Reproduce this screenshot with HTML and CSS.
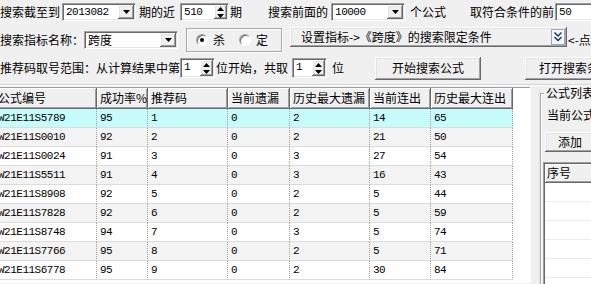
FILE: index.html
```html
<!DOCTYPE html>
<html>
<head>
  <meta charset="utf-8">
  <title>搜索公式</title>
  <link rel="stylesheet" href="styles.css">
</head>

<body>
<div class="app">

  <!-- search range -->
  <div class="bar row1">
    <span>搜索截至到</span>
    <div class="field combo date"><span class="val">2013082</span><span class="drop"><svg width="7" height="4"><polygon points="0,0 7,0 3.5,4"/></svg></span></div>
    <span class="gap3">期的近</span>
    <div class="field spin periods"><span class="val">510</span><span class="arrows"><svg width="7" height="11"><polygon points="0,4 7,4 3.5,0"/><polygon points="0,7 7,7 3.5,11"/></svg></span></div>
    <span class="gap1">期</span>
    <span class="gap26">搜索前面的</span>
    <div class="field combo total"><span class="val">10000</span><span class="drop"><svg width="7" height="4"><polygon points="0,0 7,0 3.5,4"/></svg></span></div>
    <span class="gap5">个公式</span>
    <span class="gap24">取符合条件的前</span>
    <div class="field top"><span class="val">50</span></div>
  </div>

  <!-- index -->
  <div class="bar row2">
    <span>搜索指标名称：</span>
    <div class="field combo index"><span class="val cjk">跨度</span><span class="drop"><svg width="7" height="4"><polygon points="0,0 7,0 3.5,4"/></svg></span></div>
    <div class="opts">
      <span class="radio on"></span><span class="opt">杀</span>
      <span class="radio second"></span><span class="opt">定</span>
    </div>
    <div class="picker">
      <span class="picker-text">设置指标-&gt;《跨度》的搜索限定条件</span>
      <svg class="picker-icon" width="14" height="16" viewBox="0 0 14 16"><rect x=".5" y=".5" width="13" height="15" fill="#f3f6fb" stroke="#9aa8c0"/><path d="M3.5 3.5l3.5 3.5 3.5-3.5M3.5 8l3.5 3.5 3.5-3.5" fill="none" stroke="#1d2c63" stroke-width="1.4"/></svg>
    </div>
    <span class="gap1">&lt;-点</span>
  </div>

  <!-- pick range + actions -->
  <div class="bar row3">
    <span>推荐码取号范围：从计算结果中第</span>
    <div class="field spin pick"><span class="val">1</span><span class="arrows"><svg width="7" height="11"><polygon points="0,4 7,4 3.5,0"/><polygon points="0,7 7,7 3.5,11"/></svg></span></div>
    <span class="gap1">位开始，共取</span>
    <div class="field spin pick gap4"><span class="val">1</span><span class="arrows"><svg width="7" height="11"><polygon points="0,4 7,4 3.5,0"/><polygon points="0,7 7,7 3.5,11"/></svg></span></div>
    <span class="gap5">位</span>
    <button class="btn start">开始搜索公式</button>
    <button class="btn open">打开搜索条件</button>
  </div>

  <div class="sep"></div>

  <div class="main">
    <div class="grid-wrap">
      <table class="grid">
        <colgroup>
          <col style="width:100px"><col style="width:51px"><col style="width:80px"><col style="width:62px"><col style="width:80px"><col style="width:61px"><col style="width:82px">
        </colgroup>
        <thead>
          <tr><th class="first">公式编号</th><th>成功率%</th><th>推荐码</th><th>当前遗漏</th><th>历史最大遗漏</th><th>当前连出</th><th>历史最大连出</th></tr>
        </thead>
        <tbody>
          <tr class="sel"><td class="first">W21E11S5789</td><td>95</td><td>1</td><td>0</td><td>2</td><td>14</td><td>65</td></tr>
          <tr><td class="first">W21E11S0010</td><td>92</td><td>2</td><td>0</td><td>2</td><td>21</td><td>50</td></tr>
          <tr><td class="first">W21E11S0024</td><td>91</td><td>3</td><td>0</td><td>3</td><td>27</td><td>54</td></tr>
          <tr><td class="first">W21E11S5511</td><td>91</td><td>4</td><td>0</td><td>3</td><td>16</td><td>43</td></tr>
          <tr><td class="first">W21E11S8908</td><td>92</td><td>5</td><td>0</td><td>2</td><td>5</td><td>44</td></tr>
          <tr><td class="first">W21E11S7828</td><td>92</td><td>6</td><td>0</td><td>2</td><td>5</td><td>59</td></tr>
          <tr><td class="first">W21E11S8748</td><td>94</td><td>7</td><td>0</td><td>3</td><td>5</td><td>74</td></tr>
          <tr><td class="first">W21E11S7766</td><td>95</td><td>8</td><td>0</td><td>2</td><td>5</td><td>71</td></tr>
          <tr><td class="first">W21E11S6778</td><td>95</td><td>9</td><td>0</td><td>2</td><td>30</td><td>84</td></tr>
        </tbody>
      </table>
    </div>

    <div class="split"></div>

    <!-- formula list -->
    <div class="side">
      <fieldset class="group">
        <legend>公式列表</legend>
        <div class="current">当前公式：</div>
        <button class="btn add">添加</button>
        <div class="list">
          <div class="list-head">序号</div>
          <div class="list-row"></div>
          <div class="list-row"></div>
          <div class="list-row"></div>
          <div class="list-row"></div>
          <div class="list-row"></div>
          <div class="list-row"></div>
        </div>
      </fieldset>
    </div>
  </div>

</div>
</body>
</html>
```

FILE: styles.css
```css
body {
  margin: 0;
  background: #f0f0f0;
  font-family: "Noto Sans CJK SC", sans-serif;
  font-size: 12px;
  line-height: 14px;
  color: #000;
}
.app {
  width: 591px;
  height: 284px;
  overflow: hidden;
}

/* ---- control rows ---- */
.bar {
  display: flex;
  align-items: center;
  white-space: nowrap;
}
.bar > * {
  flex-shrink: 0;
}
.row1 { height: 24px; }
.row2 { height: 26px; margin-top: 3px; }
.row3 { height: 26px; margin-top: 2px; }

.gap1 { margin-left: 1px; }
.gap3 { margin-left: 3px; }
.gap4 { margin-left: 4px; }
.gap5 { margin-left: 5px; }
.gap24 { margin-left: 24px; }
.gap26 { margin-left: 26px; }

/* sunken edit / combo */
.field {
  display: flex;
  align-items: stretch;
  box-sizing: border-box;
  height: 18px;
  padding: 1px;
  background: #fff;
  border: 1px solid;
  border-color: #a0a0a0 #fff #fff #a0a0a0;
  box-shadow: inset 1px 1px #696969, inset -1px -1px #e3e3e3;
}
.val {
  flex: 1;
  padding-left: 2px;
  font-family: "Liberation Mono", monospace;
  font-size: 11px;
  line-height: 14px;
  letter-spacing: -0.5px;
}
.val.cjk {
  font-family: "Noto Sans CJK SC", sans-serif;
  font-size: 12px;
  letter-spacing: 0;
}
.drop, .arrows {
  display: flex;
  align-items: center;
  justify-content: center;
  background: #f0f0f0;
  box-shadow: inset -1px -1px #696969, inset 1px 1px #fff, inset -2px -2px #a0a0a0, inset 2px 2px #e3e3e3;
}
.drop { width: 16px; }
.arrows { width: 13px; }

.date { width: 74px; margin-left: 2px; }
.periods { width: 49px; margin-left: 5px; }
.total { width: 74px; margin-left: 3px; }
.top { width: 50px; margin-left: 1px; }
.index { width: 94px; }
.pick { width: 35px; height: 20px; }

/* kill / keep */
.opts {
  display: flex;
  align-items: center;
  box-sizing: border-box;
  width: 96px;
  height: 24px;
  margin-left: 8px;
  padding-left: 9px;
  border: 1px solid #a8a8a8;
  box-shadow: inset 1px 1px #fff, 1px 1px #fff;
}
.radio {
  display: flex;
  align-items: center;
  justify-content: center;
  box-sizing: border-box;
  width: 12px;
  height: 12px;
  border-radius: 50%;
  border: 1px solid;
  border-color: #a0a0a0 #fff #fff #a0a0a0;
  background: #fff;
  box-shadow: inset 1px 1px #696969;
}
.radio.on::after {
  content: "";
  width: 4px;
  height: 4px;
  border-radius: 50%;
  background: #000;
}
.radio.second { margin-left: 14px; }
.opt { margin-left: 5px; }

/* index condition picker */
.picker {
  display: flex;
  align-items: center;
  box-sizing: border-box;
  width: 277px;
  height: 20px;
  margin-left: 8px;
  align-self: flex-start;
  padding: 0 2px 0 11px;
  background: #f0f0f0;
  box-shadow: inset -1px -1px #696969, inset 1px 1px #fff, inset -2px -2px #a0a0a0, inset 2px 2px #e3e3e3;
}
.picker-text { flex: 1; }

/* buttons */
.btn {
  box-sizing: border-box;
  height: 23px;
  padding: 0;
  border: none;
  background: #f0f0f0;
  font-family: "Noto Sans CJK SC", sans-serif;
  font-size: 12px;
  line-height: 14px;
  color: #000;
  box-shadow: inset -1px -1px #696969, inset 1px 1px #fff, inset -2px -2px #a0a0a0, inset 2px 2px #e3e3e3;
}
.start { width: 106px; margin-left: 31px; }
.open { width: 100px; margin-left: 44px; }

.sep {
  margin-top: 3px;
  border-top: 1px solid #d4d4d4;
  border-bottom: 1px solid #fff;
}

/* ---- result grid ---- */
.main {
  display: flex;
  height: 196px;
  margin-top: 1px;
}
.grid-wrap {
  width: 530px;
  flex-shrink: 0;
  overflow: hidden;
  background: #fff;
  border-top: 1px solid #a0a0a0;
}
.grid {
  table-layout: fixed;
  width: 516px;
  margin-left: -3px;
  border-collapse: separate;
  border-spacing: 0;
}
.grid thead tr { height: 21px; }
.grid tbody tr { height: 19px; }
.grid th {
  padding: 0 3px;
  text-align: left;
  font-weight: normal;
  white-space: nowrap;
  background: #f0f0f0;
  border-right: 1px solid #696969;
  border-bottom: 1px solid #696969;
  box-shadow: inset 1px 1px #fff, inset -1px -1px #a0a0a0;
}
.grid td {
  padding: 0 3px;
  white-space: nowrap;
  font-family: "Liberation Mono", monospace;
  font-size: 11px;
  letter-spacing: -0.5px;
  border-right: 1px dotted #a0a0a0;
  border-bottom: 1px solid #dcdcdc;
}
.grid .first { padding-left: 1px; }
.grid tbody tr:nth-child(even) { background: #f3f3f3; }
.grid tr.sel { background: #c6fcfc; }

.split {
  width: 8px;
  flex-shrink: 0;
  border-left: 1px solid #fff;
  border-right: 1px solid #e2e2e2;
}

/* ---- formula list ---- */
.side {
  width: 80px;
  flex-shrink: 0;
}
.group {
  margin: 0;
  padding: 0 0 0 2px;
  height: 200px;
  border: 1px solid #a8a8a8;
  box-shadow: inset 1px 1px #fff;
}
.group legend {
  padding: 0 2px;
  margin-left: 1px;
  line-height: 12px;
}
.current {
  margin-top: 9px;
  padding-left: 4px;
  white-space: nowrap;
}
.add {
  display: block;
  width: 50px;
  height: 20px;
  margin: 10px 0 0 2px;
}
.list {
  margin-top: 10px;
  height: 140px;
  background: #fff;
  border: 1px solid;
  border-color: #a0a0a0 #fff #fff #a0a0a0;
  box-shadow: inset 1px 1px #696969;
  padding: 1px 0 0 1px;
}
.list-head {
  height: 18px;
  line-height: 18px;
  padding-left: 2px;
  background: #f0f0f0;
  box-shadow: inset 1px 1px #fff, inset -1px -1px #a0a0a0;
  border-bottom: 1px solid #696969;
}
.list-row {
  height: 18px;
  border-bottom: 1px solid #ececec;
}
```
